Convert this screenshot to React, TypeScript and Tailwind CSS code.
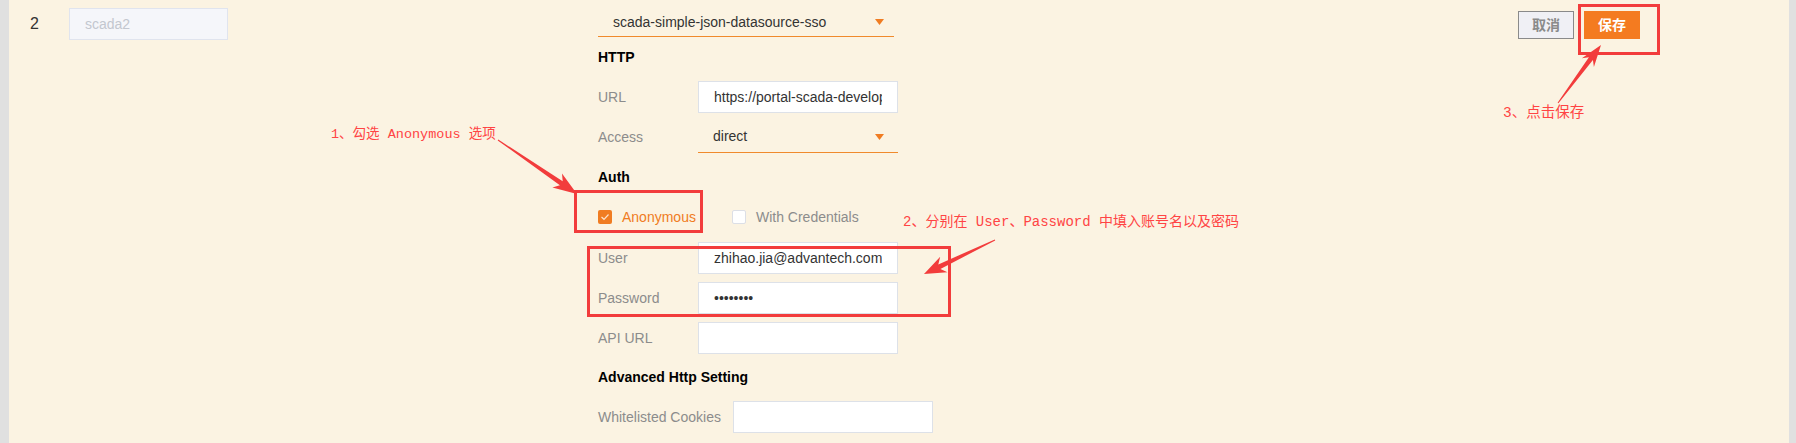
import React from "react";

type Pt = [number, number];

// tapered arrow from tail to tip, as a polygon
function arrowPoints(tail: Pt, tip: Pt, w0: number, w1: number, hl: number, hw: number) {
  const [tx, ty] = tail;
  const [px, py] = tip;
  const dx = px - tx;
  const dy = py - ty;
  const len = Math.hypot(dx, dy);
  const ux = dx / len;
  const uy = dy / len;
  const nx = -uy;
  const ny = ux;
  const bx = px - ux * hl;
  const by = py - uy * hl;
  const pts: Pt[] = [
    [tx + (nx * w0) / 2, ty + (ny * w0) / 2],
    [bx + (nx * w1) / 2 + ux * 3, by + (ny * w1) / 2 + uy * 3],
    [bx + (nx * hw) / 2 - ux * 2, by + (ny * hw) / 2 - uy * 2],
    [px, py],
    [bx - (nx * hw) / 2 - ux * 2, by - (ny * hw) / 2 - uy * 2],
    [bx - (nx * w1) / 2 + ux * 3, by - (ny * w1) / 2 + uy * 3],
    [tx - (nx * w0) / 2, ty - (ny * w0) / 2],
  ];
  return pts.map((p) => p.map((v) => v.toFixed(1)).join(",")).join(" ");
}

function Caret() {
  return (
    <svg width="9" height="6" viewBox="0 0 9 6" className="shrink-0">
      <path d="M0 0H9L4.5 6Z" fill="#f07c22" />
    </svg>
  );
}

function Field({ label, value, labelW = "w-[100px]" }: { label: string; value?: string; labelW?: string }) {
  return (
    <div className="flex items-center">
      <div className={`${labelW} shrink-0 text-[14px] text-[#8c8c8c]`}>{label}</div>
      <div className="flex h-[32px] w-[200px] items-center border border-[#dde1e8] bg-white px-[15px] text-[14px] text-[#333]">
        <div className="overflow-hidden whitespace-nowrap">{value}</div>
      </div>
    </div>
  );
}

export default function App() {
  return (
    <div className="relative flex h-[443px] w-full font-['Liberation_Sans','Noto_Sans_CJK_SC',sans-serif]">
      <div className="w-[9px] shrink-0 bg-[#e0e0e0]" />
      <div className="flex flex-1 bg-[#fbf3e2]">
        <div className="w-[60px] shrink-0 pl-[21px] pt-[14px] text-[16px] leading-[20px] text-[#333]">2</div>
        <div className="mt-[8px] flex h-[32px] w-[159px] shrink-0 items-center border border-[#e0e4ee] bg-[#f5f6fa] px-[15px] text-[14px] text-[#c3c7cf]">
          scada2
        </div>

        <div className="ml-[370px] flex w-[340px] shrink-0 flex-col">
          <div className="mt-[8px] flex h-[29px] w-[296px] items-center justify-between border-b border-[#f08a2c] pl-[15px] pr-[10px] text-[14px] text-[#333]">
            <span>scada-simple-json-datasource-sso</span>
            <Caret />
          </div>

          <div className="mt-[10px] text-[14px] font-bold leading-[20px] text-black">HTTP</div>

          <div className="mt-[14px]">
            <Field label="URL" value="https://portal-scada-develop.example" />
          </div>

          <div className="mt-[8px] flex items-center">
            <div className="w-[100px] shrink-0 text-[14px] text-[#8c8c8c]">Access</div>
            <div className="flex h-[32px] w-[200px] items-center justify-between border-b border-[#f08a2c] pl-[15px] pr-[14px] text-[14px] text-[#333]">
              <span>direct</span>
              <Caret />
            </div>
          </div>

          <div className="mt-[14px] text-[14px] font-bold leading-[20px] text-black">Auth</div>

          <div className="mt-[20px] flex h-[20px] items-center text-[14px]">
            <div className="flex h-[14px] w-[14px] items-center justify-center rounded-[2px] bg-[#f07c22]">
              <svg width="10" height="8" viewBox="0 0 10 8">
                <path d="M1.5 4L4 6.3L8.5 1.5" fill="none" stroke="#fde3cc" strokeWidth="1.2" />
              </svg>
            </div>
            <span className="ml-[10px] text-[#f07c22]">Anonymous</span>
            <div className="ml-[36px] h-[14px] w-[14px] rounded-[2px] border border-[#dcdfe6] bg-white" />
            <span className="ml-[10px] text-[#8c8c8c]">With Credentials</span>
          </div>

          <div className="mt-[15px] flex flex-col gap-[8px]">
            <Field label="User" value="zhihao.jia@advantech.com" />
            <Field label="Password" value="••••••••" />
            <Field label="API URL" />
          </div>

          <div className="mt-[13px] text-[14px] font-bold leading-[20px] text-black">Advanced Http Setting</div>

          <div className="mt-[14px]">
            <Field label="Whitelisted Cookies" labelW="w-[135px]" />
          </div>
        </div>

        <div className="flex-1" />

        <div className="mt-[11px] flex h-[28px] gap-[10px] pr-[149px]">
          <button className="h-[28px] w-[56px] border border-[#8a8a8a] bg-[#f0f0f5] text-[14px] font-bold text-[#8a8a8a]">
            取消
          </button>
          <button className="h-[28px] w-[56px] bg-[#f47b20] text-[14px] font-bold text-white">保存</button>
        </div>
      </div>
      <div className="w-[7px] shrink-0 bg-[#e0e0e0]" />

      {/* annotations laid over the form */}
      <div className="pointer-events-none absolute left-[331px] top-[125px] whitespace-nowrap font-['Liberation_Mono','Noto_Sans_CJK_SC',monospace] text-[13.5px] leading-[20px] text-[#ff4444]">
        1、勾选 Anonymous 选项
      </div>
      <div className="pointer-events-none absolute left-[903px] top-[212px] whitespace-nowrap font-['Liberation_Mono','Noto_Sans_CJK_SC',monospace] text-[14px] leading-[20px] text-[#ff4444]">
        2、分别在 User、Password 中填入账号名以及密码
      </div>
      <div className="pointer-events-none absolute left-[1503px] top-[103px] whitespace-nowrap font-['Liberation_Mono','Noto_Sans_CJK_SC',monospace] text-[14.5px] leading-[20px] text-[#ff4444]">
        3、点击保存
      </div>

      <div className="pointer-events-none absolute left-[574px] top-[190px] h-[43px] w-[129px] border-[3px] border-[#f23c3c]" />
      <div className="pointer-events-none absolute left-[587px] top-[246px] h-[71px] w-[364px] border-[3px] border-[#f23c3c]" />
      <div className="pointer-events-none absolute left-[1578px] top-[4px] h-[51px] w-[82px] border-[3px] border-[#f23c3c]" />

      <svg className="pointer-events-none absolute left-0 top-0" width="1796" height="443">
        <polygon points={arrowPoints([498, 140], [577, 194], 1, 5, 22, 17)} fill="#f23c3c" />
        <polygon points={arrowPoints([995, 240], [924, 274], 1, 5, 20, 17)} fill="#f23c3c" />
        <polygon points={arrowPoints([1558, 103], [1601, 45], 1, 5, 20, 15)} fill="#f23c3c" />
      </svg>
    </div>
  );
}
